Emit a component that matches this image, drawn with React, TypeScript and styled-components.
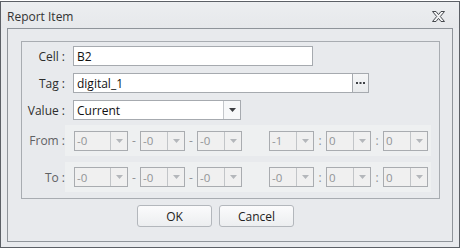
import React from "react";
import styled, { createGlobalStyle } from "styled-components";

const GlobalStyle = createGlobalStyle`
  html, body {
    margin: 0;
    padding: 0;
    background: #ffffff;
  }
  body {
    font-family: "Open Sans", "Liberation Sans", sans-serif;
    font-size: 12px;
    color: #2b2b2b;
  }
`;

type DateTimeRow = {
  label: string;
  date: string[];
  time: string[];
};

const rows: DateTimeRow[] = [
  { label: "From", date: ["-0", "-0", "-0"], time: ["-1", "0", "0"] },
  { label: "To", date: ["-0", "-0", "-0"], time: ["-0", "0", "0"] },
];

const CloseIcon = () => (
  <svg width="13" height="11" viewBox="0 0 13 11">
    <polygon
      points="0.5,0.5 4,0.5 6.5,3.6 9,0.5 12.5,0.5 8.3,5.5 12.5,10.5 9,10.5 6.5,7.4 4,10.5 0.5,10.5 4.7,5.5"
      fill="#f4f5f6"
      stroke="#45484d"
      strokeWidth="1"
    />
  </svg>
);

const Dots = () => (
  <svg width="9" height="2" viewBox="0 0 9 2">
    <rect x="0" y="0" width="2" height="2" fill="#3f4246" />
    <rect x="3.5" y="0" width="2" height="2" fill="#3f4246" />
    <rect x="7" y="0" width="2" height="2" fill="#3f4246" />
  </svg>
);

const Arrow = ({ dark }: { dark?: boolean }) => (
  <svg width="7" height="4" viewBox="0 0 7 4">
    <polygon points="0,0 7,0 3.5,4" fill={dark ? "#3d3f42" : "#b4b7bb"} />
  </svg>
);

export default function App() {
  return (
    <>
      <GlobalStyle />
      <Window>
        <TitleBar>
          <Title>Report Item</Title>
          <CloseButton>
            <CloseIcon />
          </CloseButton>
        </TitleBar>
        <Panel>
          <GroupBox>
            {/* Cell */}
            <FieldRow>
              <Label>Cell :</Label>
              <TextInput $width={240}>B2</TextInput>
            </FieldRow>

            {/* Tag */}
            <FieldRow>
              <Label>Tag :</Label>
              <TextInput $width={280}>digital_1</TextInput>
              <BrowseButton>
                <Dots />
              </BrowseButton>
            </FieldRow>

            {/* Value */}
            <FieldRow>
              <Label>Value :</Label>
              <Select>
                <SelectText>Current</SelectText>
                <SelectArrow>
                  <Arrow dark />
                </SelectArrow>
              </Select>
            </FieldRow>

            {rows.map((row, i) => (
              <BandRow key={row.label} $first={i === 0}>
                <Label $disabled>{row.label} :</Label>
                <Band $first={i === 0}>
                  {row.date.map((v, j) => (
                    <React.Fragment key={"d" + j}>
                      {j > 0 && <Sep>-</Sep>}
                      <Combo $width={j === 0 ? 54 : 45}>
                        <ComboText>{v}</ComboText>
                        <ComboArrow>
                          <Arrow />
                        </ComboArrow>
                      </Combo>
                    </React.Fragment>
                  ))}
                  <TimeGroup>
                    {row.time.map((v, j) => (
                      <React.Fragment key={"t" + j}>
                        {j > 0 && <Sep>:</Sep>}
                        <Combo $width={45}>
                          <ComboText>{v}</ComboText>
                          <ComboArrow>
                            <Arrow />
                          </ComboArrow>
                        </Combo>
                      </React.Fragment>
                    ))}
                  </TimeGroup>
                </Band>
              </BandRow>
            ))}
          </GroupBox>

          <ButtonRow>
            <DialogButton>OK</DialogButton>
            <DialogButton>Cancel</DialogButton>
          </ButtonRow>
        </Panel>
      </Window>
    </>
  );
}

const Window = styled.div`
  margin-top: 1px;
  width: 460px;
  height: 247px;
  box-sizing: border-box;
  border: 1px solid #5c6066;
  background: #e8eaed;
  display: flex;
  flex-direction: column;
`;

const TitleBar = styled.div`
  height: 26px;
  display: flex;
  align-items: center;
  justify-content: space-between;
  padding: 0 14px 0 6px;
  background: linear-gradient(#eceef0, #e6e8eb);
`;

const Title = styled.span`
  font-size: 12px;
  color: #333;
  padding-top: 2px;
`;

const CloseButton = styled.span`
  display: flex;
  padding-top: 2px;
`;

const Panel = styled.div`
  flex: 1;
  margin: 0 6px 5px;
  border: 1px solid #8f949a;
  padding: 12px 12px 0 13px;
  display: flex;
  flex-direction: column;
`;

const GroupBox = styled.div`
  border: 1px solid #a8acb1;
  padding: 4px 6px 6px 0;
  display: flex;
  flex-direction: column;
  gap: 7px;
`;

const FieldRow = styled.div`
  display: flex;
  align-items: center;
  height: 20px;
`;

const Label = styled.span<{ $disabled?: boolean }>`
  width: 43px;
  flex: none;
  text-align: right;
  white-space: nowrap;
  color: ${(p) => (p.$disabled ? "#5f6164" : "#2e2e2e")};
  margin-right: ${(p) => (p.$disabled ? "0" : "8px")};
`;

const TextInput = styled.div<{ $width: number }>`
  width: ${(p) => p.$width}px;
  height: 20px;
  box-sizing: border-box;
  border: 1px solid #a6aaaf;
  background: #fff;
  padding-left: 3px;
  display: flex;
  align-items: center;
  color: #111;
`;

const BrowseButton = styled.div`
  width: 17px;
  height: 20px;
  box-sizing: border-box;
  margin-left: -1px;
  border: 1px solid #a6aaaf;
  background: linear-gradient(#f5f6f7, #e9ebed);
  display: flex;
  align-items: center;
  justify-content: center;
`;

const Select = styled.div`
  width: 168px;
  height: 20px;
  box-sizing: border-box;
  border: 1px solid #a6aaaf;
  background: #fff;
  display: flex;
`;

const SelectText = styled.span`
  flex: 1;
  padding-left: 3px;
  display: flex;
  align-items: center;
  color: #111;
`;

const SelectArrow = styled.span`
  width: 16px;
  border-left: 1px solid #c4c7cb;
  display: flex;
  align-items: center;
  justify-content: center;
  background: #f7f8f9;
`;

const BandRow = styled.div<{ $first: boolean }>`
  display: flex;
  align-items: center;
  margin-top: ${(p) => (p.$first ? "-2px" : "-1px")};
`;

const Band = styled.div<{ $first: boolean }>`
  width: 366px;
  height: ${(p) => (p.$first ? 31 : 30)}px;
  box-sizing: border-box;
  background: #eef0f1;
  padding: 0 0 0 9px;
  display: flex;
  align-items: center;
`;

const TimeGroup = styled.div`
  display: flex;
  align-items: center;
  margin-left: 27px;
`;

const Combo = styled.div<{ $width: number }>`
  width: ${(p) => p.$width}px;
  height: 20px;
  box-sizing: border-box;
  border: 1px solid #a9acb0;
  background: #f0f0f0;
  display: flex;
`;

const ComboText = styled.span`
  flex: 1;
  padding-left: 2px;
  display: flex;
  align-items: center;
  font-size: 11.5px;
  color: #929497;
`;

const ComboArrow = styled.span`
  width: 16px;
  border-left: 1px solid #c2c5c8;
  display: flex;
  align-items: center;
  justify-content: center;
`;

const Sep = styled.span`
  width: 12px;
  text-align: center;
  color: #929497;
  font-size: 12px;
`;

const ButtonRow = styled.div`
  display: flex;
  gap: 7px;
  padding-left: 116px;
  margin-top: 6px;
`;

const DialogButton = styled.div`
  width: 75px;
  height: 22px;
  box-sizing: border-box;
  border: 1px solid #b3b7bc;
  border-radius: 3px;
  background: linear-gradient(#fbfbfc, #eceef0);
  display: flex;
  align-items: center;
  justify-content: center;
  color: #222;
`;
